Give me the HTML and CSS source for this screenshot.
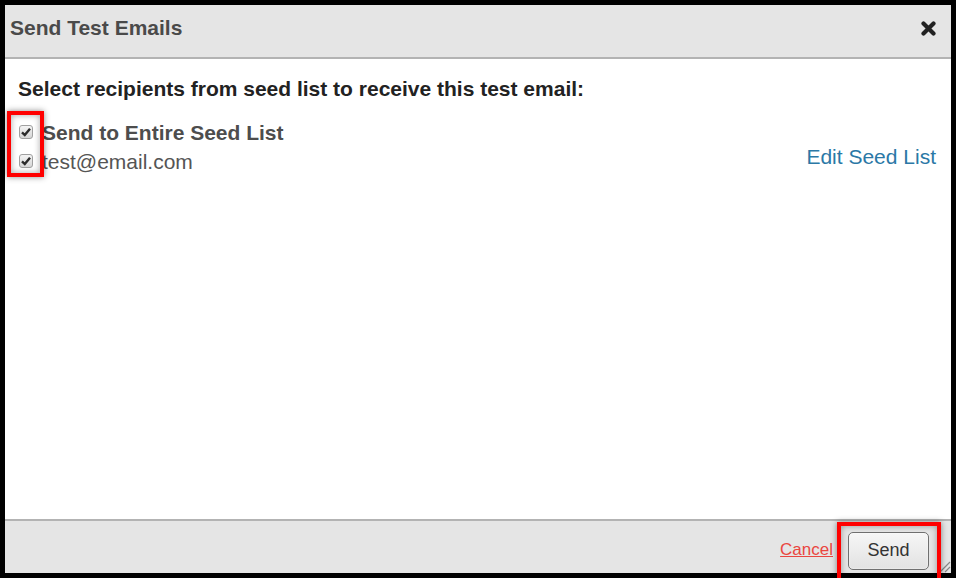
FILE: index.html
```html
<!DOCTYPE html>
<html lang="en">
<head>
    <meta charset="UTF-8">
    <meta name="viewport" content="width=device-width, initial-scale=1.0">
    <title>Send Test Emails</title>
    <link rel="stylesheet" href="styles.css">
</head>
<body>
    <div class="dialog">
        <div class="dialog-header">
            <div class="dialog-title">Send Test Emails</div>
            <button class="close-button" aria-label="Close">
                <svg width="15" height="15" viewBox="0 0 15 15">
                    <path d="M2.5 2.5 L12.5 12.5 M12.5 2.5 L2.5 12.5" stroke="#222" stroke-width="4.2" stroke-linecap="round"/>
                </svg>
            </button>
        </div>
        <div class="dialog-body">
            <div class="body-heading">Select recipients from seed list to receive this test email:</div>
            <div class="seed-list">
                <div class="recipients">
                    <label class="recipient recipient-all">
                        <span class="check"><svg width="12" height="12" viewBox="0 0 12 12"><path d="M2 6.3 L4.8 9 L10 2.8" fill="none" stroke="#2b2b2b" stroke-width="2.4"/></svg></span>
                        Send to Entire Seed List
                    </label>
                    <label class="recipient">
                        <span class="check"><svg width="12" height="12" viewBox="0 0 12 12"><path d="M2 6.3 L4.8 9 L10 2.8" fill="none" stroke="#2b2b2b" stroke-width="2.4"/></svg></span>
                        test@email.com
                    </label>
                </div>
                <a class="edit-link" href="#">Edit Seed List</a>
            </div>
        </div>
        <div class="dialog-footer">
            <a class="cancel-link" href="#">Cancel</a>
            <button class="send-button">Send</button>
        </div>
        <svg class="resize-grip" width="14" height="14" viewBox="0 0 14 14">
            <path d="M13 3 L3 13 M13 8 L8 13" stroke="#888" stroke-width="1.2"/>
        </svg>
    </div>
    <div class="callout callout-checks"></div>
    <div class="callout callout-send"></div>
</body>
</html>
```

FILE: styles.css
```css
body {
    margin: 0;
    padding: 5px;
    background-color: #000;
    font-family: "Liberation Sans", Arial, sans-serif;
}
.dialog {
    position: relative;
    width: 946px;
    height: 568px;
    background: #fff;
    display: flex;
    flex-direction: column;
}
.dialog-header {
    height: 41px;
    flex-shrink: 0;
    display: flex;
    justify-content: space-between;
    align-items: flex-start;
    padding: 11px 15px 0 5px;
    background-color: #e5e5e5;
    border-bottom: 2px solid #b3b3b3;
}
.dialog-title {
    font-size: 21px;
    line-height: 24px;
    font-weight: bold;
    color: #4a4a4a;
}
.close-button {
    background: none;
    border: none;
    padding: 0;
    margin-top: 5px;
    cursor: pointer;
    line-height: 0;
}
.dialog-body {
    flex: 1;
    padding: 18px 15px 0 13px;
}
.body-heading {
    font-size: 21px;
    line-height: 24px;
    font-weight: bold;
    color: #222;
}
.seed-list {
    display: flex;
    justify-content: space-between;
    margin-top: 17px;
}
.recipient {
    display: flex;
    align-items: center;
    height: 29px;
    font-size: 21px;
    color: #555;
    cursor: pointer;
}
.recipient-all {
    font-weight: bold;
    color: #4d4d4d;
}
.check {
    flex-shrink: 0;
    width: 12px;
    height: 12px;
    margin: 0 9px 0 1px;
    border: 1px solid #a0a0a0;
    border-radius: 3px;
    background: linear-gradient(#f4f4f4, #d6d6d6);
    display: flex;
    align-items: center;
    justify-content: center;
    position: relative;
    top: -1px;
}
.edit-link {
    font-size: 21px;
    line-height: 24px;
    color: #2b78a6;
    text-decoration: none;
    margin-top: 27px;
    align-self: flex-start;
}
.dialog-footer {
    height: 52px;
    flex-shrink: 0;
    display: flex;
    justify-content: flex-end;
    align-items: center;
    gap: 15px;
    padding-right: 22px;
    background-color: #e5e5e5;
    border-top: 2px solid #b3b3b3;
}
.cancel-link {
    font-size: 17px;
    color: #ea4640;
    margin-top: 5px;
}
.send-button {
    width: 81px;
    height: 38px;
    margin-top: 7px;
    font-family: "Liberation Sans", Arial, sans-serif;
    font-size: 18px;
    color: #333;
    border: 1.5px solid #707070;
    border-radius: 5px;
    background: linear-gradient(#f6f6f6, #e2e2e2);
    box-shadow: inset 0 0 2px #fff;
    cursor: pointer;
}
.resize-grip {
    position: absolute;
    right: 0;
    bottom: 0;
}
.callout {
    position: absolute;
    border: 4px solid #f00;
    box-shadow: 0 0 6px rgba(0, 0, 0, 0.45), inset 0 0 6px rgba(0, 0, 0, 0.35);
}
.callout-checks {
    left: 7px;
    top: 111px;
    width: 29px;
    height: 58px;
}
.callout-send {
    left: 837px;
    top: 522px;
    width: 96px;
    height: 52px;
}
```
